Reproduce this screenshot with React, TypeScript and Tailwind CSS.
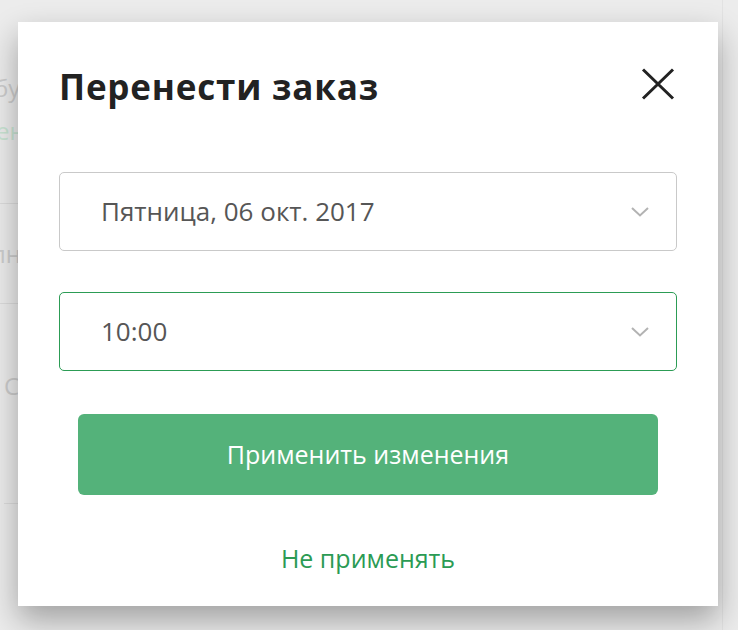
import React from 'react';

const font = { fontFamily: '"Open Sans", "Noto Sans", Arial, sans-serif' };

function CloseIcon() {
  return (
    <svg width="34" height="32" viewBox="0 0 34 32" fill="none">
      <path d="M2 1.5L32 30.5M32 1.5L2 30.5" stroke="#222" strokeWidth="3" />
    </svg>
  );
}

function Chevron() {
  return (
    <svg width="18" height="10" viewBox="0 0 18 10" fill="none">
      <path d="M1 1L9 8.5L17 1" stroke="#b3b3b3" strokeWidth="2" />
    </svg>
  );
}

function SelectBox({ value, active }: { value: string; active?: boolean }) {
  return (
    <div
      className={`flex items-center justify-between h-[79px] rounded-[5px] bg-white pl-[41px] pr-[27px] ${
        active ? 'border-[1.5px] border-[#2c9c55]' : 'border-[1.5px] border-[#c9c9c9]'
      }`}
    >
      <span className="text-[26px] text-[#565656]">{value}</span>
      <Chevron />
    </div>
  );
}

// faint page behind the overlay
function BackgroundPage() {
  return (
    <div className="flex h-full">
      <div className="w-[60px] flex flex-col text-[24px] text-[#cdcdcd] overflow-hidden whitespace-nowrap">
        <div className="h-[68px]" />
        <div className="h-[40px] leading-[40px] -ml-[6px]">бу</div>
        <div className="h-[46px] leading-[46px] -ml-[4px] text-[#c9e4d3]">ен</div>
        <div className="h-[50px] border-b border-[#dcdcdc]" />
        <div className="h-[100px] leading-[100px] -ml-[8px] border-b border-[#dcdcdc]">лн</div>
        <div className="h-[200px] pt-[62px] leading-[40px] ml-[4px] border-b border-[#dcdcdc]">С</div>
      </div>
      <div className="flex-1" />
      <div className="w-[16px] border-l border-[#e2e2e2]" />
    </div>
  );
}

export default function App() {
  return (
    <div className="relative w-[738px] h-[630px] overflow-hidden bg-[#ececec]" style={font}>
      <BackgroundPage />
      <div className="absolute inset-0 pl-[18px] pt-[22px]">
        <div className="w-[700px] h-[584px] bg-white shadow-[0_14px_30px_rgba(0,0,0,0.32)] px-[41px] pt-[40px] flex flex-col">
          <div className="flex items-center justify-between h-[50px] pr-[2px]">
            <h1 className="text-[35px] font-bold text-[#222] tracking-[0.8px] leading-none -mt-[2px]">
              Перенести заказ
            </h1>
            <button className="-mt-[7px]">
              <CloseIcon />
            </button>
          </div>

          <div className="mt-[60px]">
            <SelectBox value="Пятница, 06 окт. 2017" />
          </div>
          <div className="mt-[41px]">
            <SelectBox value="10:00" active />
          </div>

          <button className="mt-[43px] mx-[19px] h-[81px] rounded-[6px] bg-[#54b27a] text-white text-[25px]">
            Применить изменения
          </button>

          <button className="mt-[45px] h-[34px] text-[25px] text-[#2b9b54]">Не применять</button>
        </div>
      </div>
    </div>
  );
}
